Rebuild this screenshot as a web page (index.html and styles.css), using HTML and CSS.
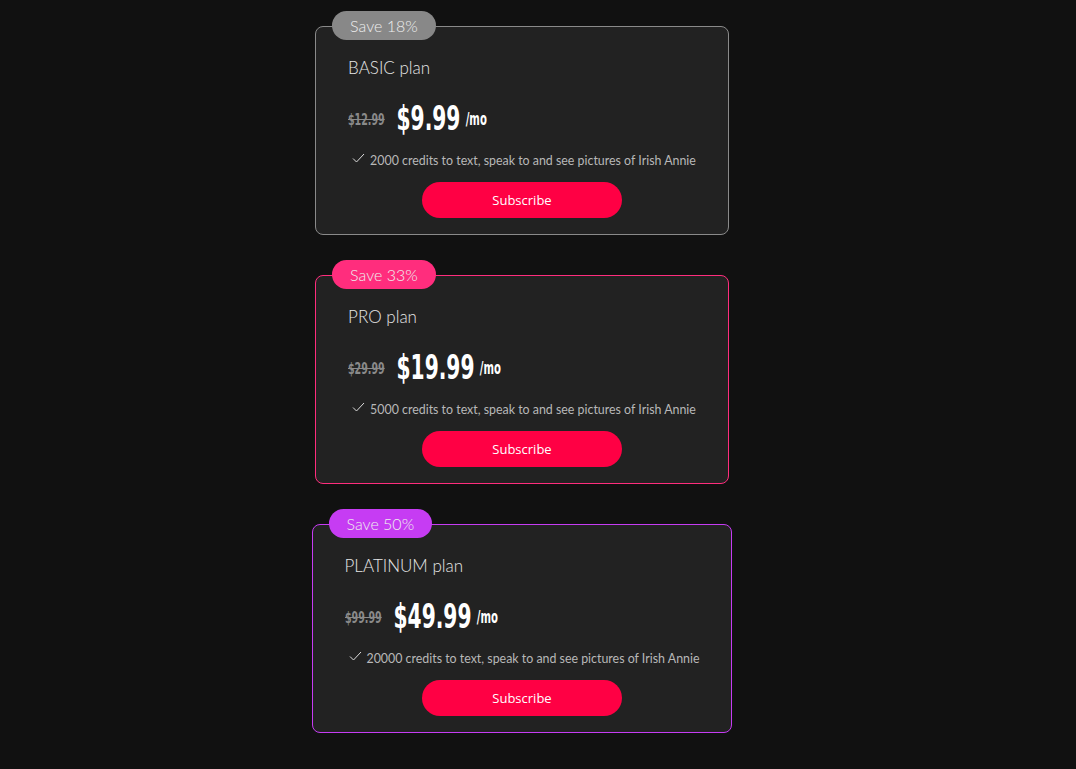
FILE: index.html
```html
<!DOCTYPE html>
<html lang="en">
<head>
    <meta charset="UTF-8">
    <meta name="viewport" content="width=device-width, initial-scale=1.0">
    <title>Plans</title>
    <link rel="stylesheet" href="styles.css">
</head>
<body>
    <div id="plans">
        <div class="plan-card basic">
            <div class="save-badge">Save 18%</div>
            <div class="plan-name">BASIC plan</div>
            <div class="price-row">
                <span class="old-price">$12.99</span>
                <span class="new-price">$9.99</span>
                <span class="per-month">/mo</span>
            </div>
            <div class="feature">
                <svg class="check" width="13" height="10" viewBox="0 0 13 10"><path d="M1 5.5 L4.5 9 L12 1" fill="none" stroke="#ddd" stroke-width="1"/></svg>
                <span>2000 credits to text, speak to and see pictures of Irish Annie</span>
            </div>
            <button class="subscribe-btn">Subscribe</button>
        </div>

        <div class="plan-card pro">
            <div class="save-badge">Save 33%</div>
            <div class="plan-name">PRO plan</div>
            <div class="price-row">
                <span class="old-price">$29.99</span>
                <span class="new-price">$19.99</span>
                <span class="per-month">/mo</span>
            </div>
            <div class="feature">
                <svg class="check" width="13" height="10" viewBox="0 0 13 10"><path d="M1 5.5 L4.5 9 L12 1" fill="none" stroke="#ddd" stroke-width="1"/></svg>
                <span>5000 credits to text, speak to and see pictures of Irish Annie</span>
            </div>
            <button class="subscribe-btn">Subscribe</button>
        </div>

        <div class="plan-card platinum">
            <div class="save-badge">Save 50%</div>
            <div class="plan-name">PLATINUM plan</div>
            <div class="price-row">
                <span class="old-price">$99.99</span>
                <span class="new-price">$49.99</span>
                <span class="per-month">/mo</span>
            </div>
            <div class="feature">
                <svg class="check" width="13" height="10" viewBox="0 0 13 10"><path d="M1 5.5 L4.5 9 L12 1" fill="none" stroke="#ddd" stroke-width="1"/></svg>
                <span>20000 credits to text, speak to and see pictures of Irish Annie</span>
            </div>
            <button class="subscribe-btn">Subscribe</button>
        </div>
    </div>
</body>
</html>
```

FILE: styles.css
```css
body {
    margin: 0;
    background-color: #111111;
    font-family: 'Lato', sans-serif;
    color: #ffffff;
}

#plans {
    display: flex;
    flex-direction: column;
    align-items: center;
    gap: 40px;
    padding: 26px 32px 35px 0;
}

.plan-card {
    position: relative;
    background-color: #222222;
    border: 1px solid #8a8a8a;
    border-radius: 8px;
    padding: 30px 32px 16px 32px;
    display: flex;
    flex-direction: column;
}

.plan-card.pro {
    border-color: #ff2d7d;
}

.plan-card.platinum {
    border-color: #c63cf3;
}

.save-badge {
    position: absolute;
    top: -16px;
    left: 16px;
    height: 29px;
    line-height: 29px;
    padding: 0 18px;
    border-radius: 15px;
    background-color: #888888;
    color: #eeeeee;
    font-size: 16px;
    font-weight: 300;
}

.pro .save-badge {
    background-color: #ff2d7d;
}

.platinum .save-badge {
    background-color: #c63cf3;
}

.plan-name {
    font-size: 17px;
    font-weight: 300;
    color: #e6e6e6;
    line-height: 22px;
}

/* condensed look for the prices */
.price-row {
    display: flex;
    align-items: center;
    margin-top: 20px;
    height: 38px;
    transform: scaleX(0.66);
    transform-origin: left center;
    font-family: 'DejaVu Sans Condensed', sans-serif;
    font-weight: bold;
}

.old-price {
    font-size: 16px;
    color: #8a8a8a;
    text-decoration: line-through;
    margin-right: 18px;
    margin-top: 2px;
}

.new-price {
    font-size: 34px;
    color: #ffffff;
    margin-right: 8px;
}

.per-month {
    font-size: 17px;
    color: #ffffff;
    margin-top: 2px;
}

.feature {
    display: flex;
    align-items: center;
    margin-top: 16px;
    padding-left: 4px;
    font-size: 12.4px;
    color: #b8b8b8;
    line-height: 15px;
}

.check {
    margin-right: 5px;
    margin-top: -5px;
}

.subscribe-btn {
    align-self: center;
    margin-top: 14px;
    width: 200px;
    height: 36px;
    border: none;
    border-radius: 18px;
    background-color: #ff0044;
    color: #ffffff;
    font-family: 'Open Sans', sans-serif;
    font-size: 13px;
    cursor: pointer;
}
```
